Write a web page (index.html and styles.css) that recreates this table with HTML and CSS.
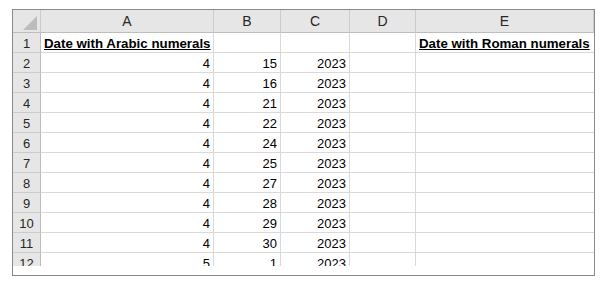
FILE: index.html
```html
<!DOCTYPE html>
<html>
<head>
<meta charset="utf-8">
<link rel="stylesheet" href="styles.css">
</head>
<body>
<div class="frame">
  <div class="sheet">
    <div class="corner"><span class="tri"></span></div>
    <div class="ch">A</div><div class="ch">B</div><div class="ch">C</div><div class="ch">D</div><div class="ch">E</div>

    <div class="rh">1</div><div class="c title">Date with Arabic numerals</div><div class="c"></div><div class="c"></div><div class="c"></div><div class="c title">Date with Roman numerals</div>
    <div class="rh">2</div><div class="c n">4</div><div class="c n">15</div><div class="c n">2023</div><div class="c"></div><div class="c"></div>
    <div class="rh">3</div><div class="c n">4</div><div class="c n">16</div><div class="c n">2023</div><div class="c"></div><div class="c"></div>
    <div class="rh">4</div><div class="c n">4</div><div class="c n">21</div><div class="c n">2023</div><div class="c"></div><div class="c"></div>
    <div class="rh">5</div><div class="c n">4</div><div class="c n">22</div><div class="c n">2023</div><div class="c"></div><div class="c"></div>
    <div class="rh">6</div><div class="c n">4</div><div class="c n">24</div><div class="c n">2023</div><div class="c"></div><div class="c"></div>
    <div class="rh">7</div><div class="c n">4</div><div class="c n">25</div><div class="c n">2023</div><div class="c"></div><div class="c"></div>
    <div class="rh">8</div><div class="c n">4</div><div class="c n">27</div><div class="c n">2023</div><div class="c"></div><div class="c"></div>
    <div class="rh">9</div><div class="c n">4</div><div class="c n">28</div><div class="c n">2023</div><div class="c"></div><div class="c"></div>
    <div class="rh">10</div><div class="c n">4</div><div class="c n">29</div><div class="c n">2023</div><div class="c"></div><div class="c"></div>
    <div class="rh">11</div><div class="c n">4</div><div class="c n">30</div><div class="c n">2023</div><div class="c"></div><div class="c"></div>
    <div class="rh">12</div><div class="c n">5</div><div class="c n">1</div><div class="c n">2023</div><div class="c"></div><div class="c"></div>
  </div>
</div>
</body>
</html>
```

FILE: styles.css
```css
html, body {
  margin: 0;
  padding: 0;
  background: #ffffff;
}
body {
  padding: 9px 0 0 12px;
  font-family: "Liberation Sans", Arial, sans-serif;
}
.frame {
  width: 583px;
  height: 267px;
  box-sizing: border-box;
  border: 1px solid #8a8a8a;
  padding-bottom: 8px;
  background: #fff;
}
.sheet {
  height: 256px;
  overflow: hidden;
  display: grid;
  grid-template-columns: 28px 173px 67px 69px 66px 1fr;
  grid-template-rows: 23px;
  grid-auto-rows: 20px;
  font-size: 13px;
  color: #000;
}
.sheet > div {
  box-sizing: border-box;
  border-right: 1px solid #d9d9d9;
  border-bottom: 1px solid #d9d9d9;
  line-height: 22px;
  white-space: nowrap;
  overflow: visible;
}
.sheet > .ch {
  background: #e6e6e6;
  border-right-color: #cbcbcb;
  border-bottom-color: #bdbdbd;
  text-align: center;
  line-height: 22px;
  font-size: 14px;
  color: #262626;
}
.sheet > .ch:last-of-type { border-right: none; }
.sheet > .corner {
  background: #e6e6e6;
  border-right-color: #cbcbcb;
  border-bottom-color: #bdbdbd;
  position: relative;
}
.tri {
  position: absolute;
  right: 3px;
  bottom: 2px;
  width: 0;
  height: 0;
  border-left: 14px solid transparent;
  border-bottom: 14px solid #bcbcbc;
}
.sheet > .rh {
  background: #e6e6e6;
  border-right-color: #bdbdbd;
  border-bottom-color: #cbcbcb;
  text-align: center;
  color: #262626;
}
.sheet > .c:nth-child(6n) { border-right: none; }
.n {
  text-align: right;
  padding-right: 3px;
}
.title {
  font-weight: bold;
  font-size: 13.3px;
  text-decoration: underline;
  padding-left: 3px;
}
```
